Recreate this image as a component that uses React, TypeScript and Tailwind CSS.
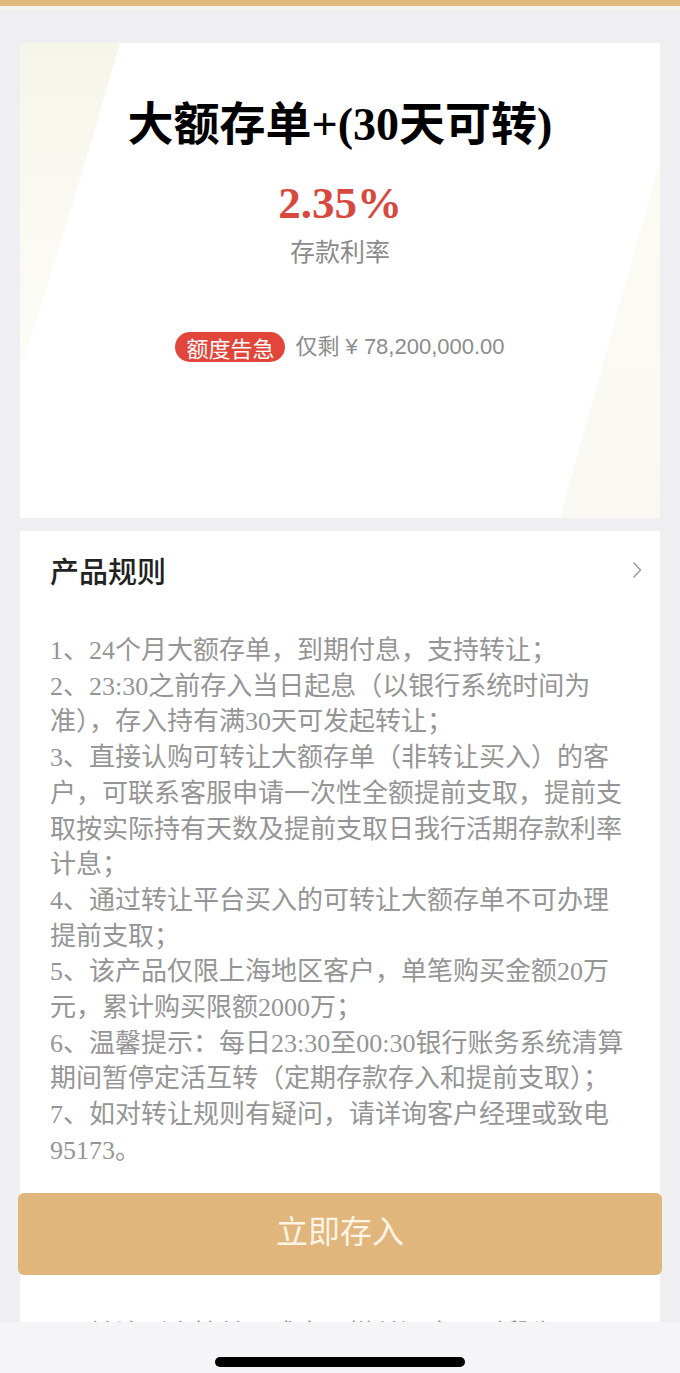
import React from 'react';

const cjkSerif = { fontFamily: '"Liberation Serif", "Noto Sans CJK SC", serif' };

const rules = [
  '1、24个月大额存单，到期付息，支持转让；',
  '2、23:30之前存入当日起息（以银行系统时间为准），存入持有满30天可发起转让；',
  '3、直接认购可转让大额存单（非转让买入）的客户，可联系客服申请一次性全额提前支取，提前支取按实际持有天数及提前支取日我行活期存款利率计息；',
  '4、通过转让平台买入的可转让大额存单不可办理提前支取；',
  '5、该产品仅限上海地区客户，单笔购买金额20万元，累计购买限额2000万；',
  '6、温馨提示：每日23:30至00:30银行账务系统清算期间暂停定活互转（定期存款存入和提前支取）；',
  '7、如对转让规则有疑问，请详询客户经理或致电95173。',
];

function CardDecor() {
  // 卡片背景上的浅色斜面
  return (
    <svg className="pointer-events-none absolute inset-0 h-full w-full" viewBox="0 0 640 475" preserveAspectRatio="none">
      <defs>
        <linearGradient id="lg" x1="0" y1="0" x2="0" y2="1">
          <stop offset="0" stopColor="#f6f5ea" />
          <stop offset="1" stopColor="#fdfdf9" />
        </linearGradient>
        <linearGradient id="rg" x1="0" y1="0" x2="0" y2="1">
          <stop offset="0" stopColor="#fcfbf4" />
          <stop offset="1" stopColor="#f9f8f2" />
        </linearGradient>
      </defs>
      <path d="M0 0 L100 0 Q60 140 0 330 Z" fill="url(#lg)" />
      <path d="M640 118 L640 475 L540 475 Q600 260 640 118 Z" fill="url(#rg)" />
    </svg>
  );
}

export default function App() {
  return (
    <div className="relative min-h-screen bg-[#efeff1]" style={{ fontFamily: '"Noto Sans CJK SC", sans-serif' }}>
      {/* 顶部金色条 */}
      <div className="h-[6px] bg-[#e1b97f]" />
      <div className="h-[4px] bg-[#f6f3ef]" />

      <div className="px-[20px] pt-[33px] pb-[200px]">
        {/* 产品卡片 */}
        <section className="relative h-[475px] overflow-hidden bg-white">
          <CardDecor />
          <div className="relative flex flex-col items-center">
            <h1 className="mt-[56px] text-[46px] font-bold leading-[52px] text-black" style={cjkSerif}>
              大额存单+(30天可转)
            </h1>
            <div className="mt-[28px] text-[45px] font-bold leading-[48px] text-[#d7483e]" style={cjkSerif}>
              2.35%
            </div>
            <div className="mt-[6px] text-[25px] leading-[34px] text-[#8a8a8a]">存款利率</div>
            <div className="mt-[65px] flex items-center gap-[10px]">
              <span className="rounded-full bg-[#e2463a] px-[11px] text-[22px] leading-[30px] text-white">额度告急</span>
              <span
                className="text-[22px] leading-[30px] text-[#8c8c8c]"
                style={{ fontFamily: '"Liberation Sans", "Noto Sans CJK SC", sans-serif' }}
              >
                仅剩 ¥ 78,200,000.00
              </span>
            </div>
          </div>
        </section>

        {/* 产品规则 */}
        <section className="mt-[13px] bg-white pl-[30px] pr-[32px]">
          <div className="flex h-[78px] items-center justify-between">
            <h2 className="text-[29px] font-medium leading-none text-[#222]">产品规则</h2>
            <svg width="10" height="18" viewBox="0 0 10 18" className="mr-[-14px]">
              <polyline points="1.5,1.5 8.5,9 1.5,16.5" fill="none" stroke="#9a9a9a" strokeWidth="1.4" />
            </svg>
          </div>
          <div className="mt-[24px] w-[578px] text-[26px] leading-[35.7px] text-[#959595]" style={cjkSerif}>
            {rules.map((r) => (
              <p key={r}>{r}</p>
            ))}
          </div>

          <h2 className="mt-[70px] text-[29px] font-medium leading-[40px] text-[#222]">转让规则</h2>
          <div className="mt-[38px] w-[578px] text-[26px] leading-[35.7px] text-[#959595]" style={cjkSerif}>
            <p>1、转让（含挂单、成交、撤单）交易时段为00:00-23:30；</p>
            <p>2、转让价格由客户自行设定，成交后资金实时到账；</p>
          </div>
        </section>
      </div>

      {/* 底部按钮 */}
      <div className="fixed inset-x-0 bottom-0 flex flex-col">
        <div className="px-[18px] pb-[47px]">
          <button className="flex h-[82px] w-full items-center justify-center rounded-[6px] bg-[#e0b67c] pb-[10px] text-[32px] text-[#fdf4e3]">
            立即存入
          </button>
        </div>
        <div className="flex h-[51px] items-end justify-center bg-[#f5f5f7] pb-[6px]">
          <div className="h-[10px] w-[250px] rounded-full bg-black" />
        </div>
      </div>
    </div>
  );
}
